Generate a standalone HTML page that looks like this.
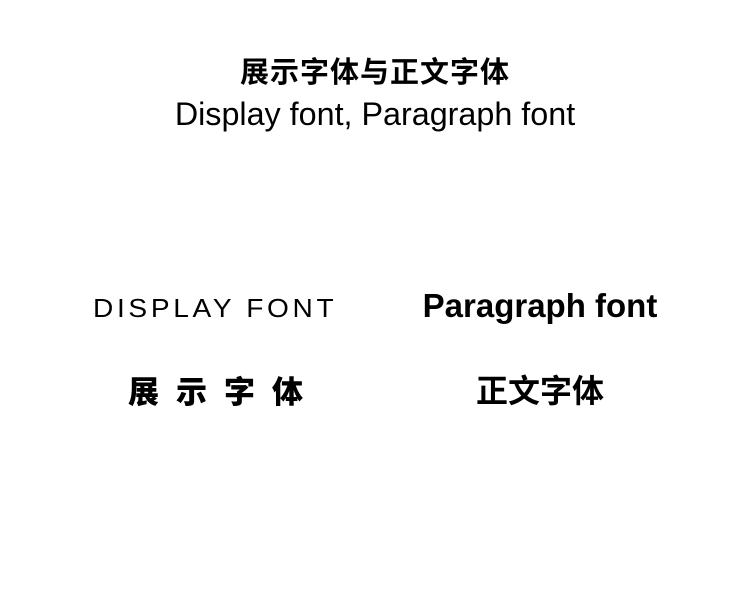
<!DOCTYPE html>
<html><head><meta charset="utf-8"><style>
html,body{margin:0;padding:0;background:#fff;width:750px;height:600px;overflow:hidden;position:relative;color:#000;}
.t{position:absolute;white-space:nowrap;line-height:1;}
</style></head><body>
<div class="t" style="left:0;width:750px;text-align:center;top:49px;font:700 29px 'Liberation Sans','Noto Sans CJK SC',sans-serif;letter-spacing:1px;">展示字体与正文字体</div>
<div class="t" style="left:0;width:750px;text-align:center;top:96px;font:400 32.3px 'Liberation Sans',sans-serif;">Display font, Paragraph font</div>
<div class="t" style="left:93px;top:293px;font:400 26px 'Liberation Sans',sans-serif;letter-spacing:3.4px;transform:scaleX(1.08);transform-origin:left;">DISPLAY FONT</div>
<div class="t" style="left:128px;top:367px;font:900 31px 'Noto Sans CJK SC',sans-serif;letter-spacing:17px;">展示字体</div>
<div class="t" style="left:340px;width:400px;text-align:center;top:287px;font:700 33px 'Liberation Sans',sans-serif;">Paragraph font</div>
<div class="t" style="left:340px;width:400px;text-align:center;top:366px;font:700 32px 'Noto Sans CJK SC',sans-serif;">正文字体</div>
</body></html>
